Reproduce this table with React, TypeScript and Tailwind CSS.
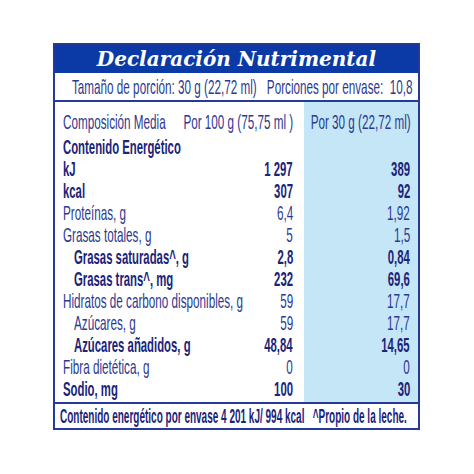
import React from "react";
import clsx from "clsx";

type Row = {
  label: string;
  per100: string;
  per30: string;
  bold?: boolean;
  indent?: boolean;
};

const rows: Row[] = [
  { label: "Contenido Energético", per100: "", per30: "", bold: true },
  { label: "kJ", per100: "1 297", per30: "389", bold: true },
  { label: "kcal", per100: "307", per30: "92", bold: true },
  { label: "Proteínas, g", per100: "6,4", per30: "1,92" },
  { label: "Grasas totales, g", per100: "5", per30: "1,5" },
  { label: "Grasas saturadas^, g", per100: "2,8", per30: "0,84", bold: true, indent: true },
  { label: "Grasas trans^, mg", per100: "232", per30: "69,6", bold: true, indent: true },
  { label: "Hidratos de carbono disponibles, g", per100: "59", per30: "17,7" },
  { label: "Azúcares, g", per100: "59", per30: "17,7", indent: true },
  { label: "Azúcares añadidos, g", per100: "48,84", per30: "14,65", bold: true, indent: true },
  { label: "Fibra dietética, g", per100: "0", per30: "0" },
  { label: "Sodio, mg", per100: "100", per30: "30", bold: true },
];

// condensed text: the label face is much narrower than Arial, so squeeze it
function T({
  children,
  bold,
  right,
  tight,
}: {
  children: React.ReactNode;
  bold?: boolean;
  right?: boolean;
  tight?: boolean;
}) {
  return (
    <span
      className={clsx(
        "inline-block whitespace-nowrap shrink-0",
        right ? "origin-right" : "origin-left",
        bold ? "font-bold text-[#1b2479]" : "text-[#2b3a91]",
        tight ? "scale-x-[0.476]" : bold ? "scale-x-[0.54]" : "scale-x-[0.557]"
      )}
    >
      {children}
    </span>
  );
}

// right-aligned cell: overflow spills to the left so the scaled text ends at the edge
function R({ children, className }: { children: React.ReactNode; className?: string }) {
  return <div className={clsx("flex justify-end min-w-0", className)}>{children}</div>;
}

export default function App() {
  return (
    <div className="w-[474px] h-[474px] bg-white pt-[43px] pl-[53px] font-['Liberation_Sans',Arial,sans-serif] text-[21px]">
      <div className="w-[367px] border-2 border-[#24399a] overflow-hidden">
        {/* Title */}
        <div className="h-[28px] bg-[#0b3aa6] flex items-center justify-center">
          <span className="text-white italic font-bold text-[20px] leading-none font-['DejaVu_Serif',serif]">
            Declaración Nutrimental
          </span>
        </div>

        {/* Serving size */}
        <div className="h-[29px] border-b-2 border-[#24399a] flex items-center pl-[17px] pr-[6px] leading-[22px]">
          <div className="flex-1 min-w-0">
            <T>Tamaño de porción: 30 g (22,72 ml)</T>
          </div>
          <R className="flex-1">
            <T right>Porciones por envase:&nbsp; 10,8</T>
          </R>
        </div>

        {/* Table body */}
        <div className="flex h-[300px] leading-[22px]">
          <div className="flex-1 min-w-0 pt-[9px] pl-[8px] pr-[11px]">
            <div className="flex h-[22px] mb-[3px]">
              <div className="flex-1 min-w-0">
                <T>Composición Media</T>
              </div>
              <R className="flex-1">
                <T right>Por 100 g (75,75 ml )</T>
              </R>
            </div>
            {rows.map((r, i) => (
              <div key={i} className="flex h-[22px]">
                <div className={clsx("flex-[3] min-w-0", r.indent && "pl-[11px]")}>
                  <T bold={r.bold}>{r.label}</T>
                </div>
                <R className="flex-1">
                  <T bold={r.bold} right>
                    {r.per100}
                  </T>
                </R>
              </div>
            ))}
          </div>
          <div className="w-[114px] shrink-0 bg-[#c5e6f6] pt-[9px] pr-[7px]">
            <R className="h-[22px] mb-[3px]">
              <T right>Por 30 g (22,72 ml)</T>
            </R>
            {rows.map((r, i) => (
              <R key={i} className="h-[22px] pr-[1px]">
                <T bold={r.bold} right>
                  {r.per30}
                </T>
              </R>
            ))}
          </div>
        </div>

        {/* Footer */}
        <div className="h-[26px] border-t-2 border-[#24399a] flex items-center pl-[5px] pr-[11px] leading-[22px]">
          <div className="flex-[3] min-w-0">
            <T bold tight>Contenido energético por envase 4 201 kJ/ 994 kcal</T>
          </div>
          <R className="flex-1">
            <T bold right tight>
              ^Propio de la leche.
            </T>
          </R>
        </div>
      </div>
    </div>
  );
}
